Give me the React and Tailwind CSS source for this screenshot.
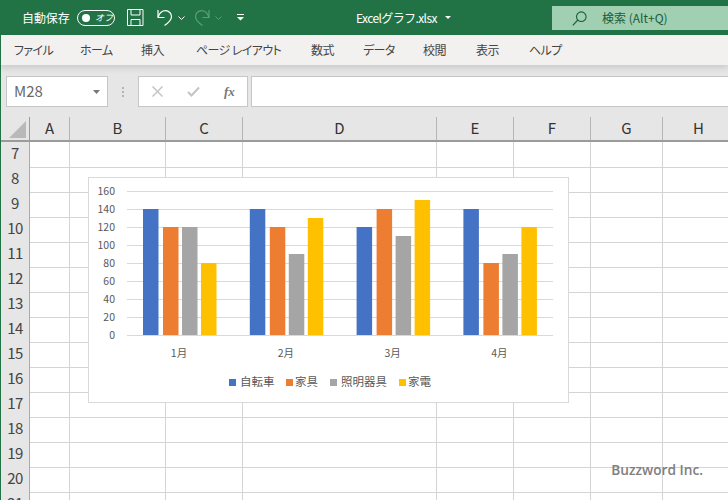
const jp = "font-['Noto_Sans_CJK_JP','Noto_Sans',sans-serif]";

const tabs = [
  { label: "ファイル", w: "w-[66px]" },
  { label: "ホーム", w: "w-[61px]" },
  { label: "挿入", w: "w-[55px]" },
  { label: "ページ レイアウト", w: "w-[115px]" },
  { label: "数式", w: "w-[52px]" },
  { label: "データ", w: "w-[60px]" },
  { label: "校閲", w: "w-[53px]" },
  { label: "表示", w: "w-[53px]" },
  { label: "ヘルプ", w: "w-[40px]" },
];
const columns = ["A", "B", "C", "D", "E", "F", "G", "H"];
const rows = [7, 8, 9, 10, 11, 12, 13, 14, 15, 16, 17, 18, 19, 20, 21];

const series = [
  { name: "自転車", color: "#4472c4", x: 143, values: [140, 140, 120, 140] },
  { name: "家具", color: "#ed7d31", x: 163, values: [120, 120, 140, 80] },
  { name: "照明器具", color: "#a5a5a5", x: 182, values: [120, 90, 110, 90] },
  { name: "家電", color: "#ffc000", x: 201, values: [80, 130, 150, 120] },
];
const months = ["1月", "2月", "3月", "4月"];
const ticks = [160, 140, 120, 100, 80, 60, 40, 20, 0];
const legend = [
  { name: "自転車", color: "#4472c4", x: 229, textX: 240 },
  { name: "家具", color: "#ed7d31", x: 286, textX: 295 },
  { name: "照明器具", color: "#a5a5a5", x: 330, textX: 341 },
  { name: "家電", color: "#ffc000", x: 399, textX: 408 },
];

function Caret({ className }) {
  return (
    <svg width="7" height="4" viewBox="0 0 7 4" className={className}>
      <path d="M.5.5 3.500 3.500 6.500.5" fill="none" stroke="currentColor" strokeWidth="1" />
    </svg>
  );
}

function TitleBar() {
  return (
    <div className="h-[35px] bg-[#217346] flex items-center text-white shrink-0">
      <span className="ml-[22px] text-[12px] w-[48px] whitespace-nowrap tracking-[-0.1px]">自動保存</span>
      <div className="ml-[7px] w-[38px] h-[16px] rounded-full border border-white flex items-center pl-[4px]">
        <span className="w-[8px] h-[8px] rounded-full bg-white" />
        <span className="ml-[5px] text-[9px] leading-none italic">オフ</span>
      </div>
      {/* save */}
      <svg width="17" height="17" viewBox="0 0 17 17" className="ml-[12px]" fill="none" stroke="#fff" strokeWidth="1">
        <path d="M.5.5h15.500v16H.5z" />
        <path d="M4 .5v5.500h9V.5M4 16.500v-6h9v6" />
      </svg>
      {/* undo */}
      <svg width="16" height="17" viewBox="0 0 16 17" className="ml-[13px]" fill="none" stroke="#fff" strokeWidth="1.200">
        <path d="M1 1v7.500h6.500" />
        <path d="M1.200 8C2.500 4 5.500 1.700 8.500 1.700c3.500 0 6 2.800 6 6 0 3.500-3 6-7 8.800" />
      </svg>
      <Caret className="ml-[5px] text-white" />
      {/* redo, greyed out */}
      <svg width="16" height="17" viewBox="0 0 16 17" className="ml-[9px]" fill="none" stroke="#5d9c78" strokeWidth="1.200">
        <path d="M15 1v7.500H8.500" />
        <path d="M14.800 8C13.500 4 10.500 1.700 7.500 1.700c-3.500 0-6 2.800-6 6 0 3.500 3 6 7 8.800" />
      </svg>
      <Caret className="ml-[5px] text-[#5d9c78]" />
      <svg width="7" height="7" viewBox="0 0 7 7" className="ml-[15px]" fill="#fff">
        <path d="M0 0h7v1H0zM0 3h7L3.500 6.500z" />
      </svg>
      <span className="ml-[112px] text-[12px] w-[88px] whitespace-nowrap tracking-[-0.6px]">Excelグラフ.xlsx</span>
      <svg width="6" height="3" viewBox="0 0 6 3" className="ml-[1px]" fill="#fff">
        <path d="M0 0h6L3 3z" />
      </svg>
      <div className="ml-auto self-end mb-[5px] w-[176px] h-[24px] bg-[#a0cfb1] flex items-center text-[#1c5c38]">
        <svg width="15" height="15" viewBox="0 0 15 15" className="ml-[20px]" fill="none" stroke="#1c5c38" strokeWidth="1.100">
          <circle cx="9.300" cy="5.700" r="4.800" />
          <path d="M5.800 9 .8 14.300" />
        </svg>
        <span className="ml-[15px] text-[12px] whitespace-nowrap">検索 (Alt+Q)</span>
      </div>
    </div>
  );
}

function Ribbon() {
  return (
    <div className="h-[30px] bg-[#f3f1f0] border-l border-[#217346] flex items-center pl-[13px] text-[12px] text-[#444] shrink-0 shadow-[0_3px_6px_rgba(0,0,0,0.12)] relative">
      {tabs.map((t) => (
        <span key={t.label} className={`${t.w} whitespace-nowrap tracking-[-0.6px] [font-feature-settings:'palt']`}>{t.label}</span>
      ))}
    </div>
  );
}

function FormulaBar() {
  return (
    <div className="h-[52px] bg-[#e6e6e6] border-l border-[#217346] flex pt-[11px] pl-[5px] shrink-0">
      <div className="w-[102px] h-[31px] bg-white border border-[#c6c6c6] flex items-center justify-between pl-[7px] pr-[7px]">
        <span className="text-[15px] text-[#6a6a6a]">M28</span>
        <svg width="7" height="4" viewBox="0 0 7 4" fill="#777">
          <path d="M0 0h7L3.500 4z" />
        </svg>
      </div>
      <div className="w-[30px] h-[31px] flex flex-col items-center justify-center gap-[2px]">
        <span className="w-[2px] h-[2px] bg-[#b5b5b5]" />
        <span className="w-[2px] h-[2px] bg-[#b5b5b5]" />
        <span className="w-[2px] h-[2px] bg-[#b5b5b5]" />
      </div>
      <div className="w-[110px] h-[31px] bg-white border border-[#c6c6c6] flex items-center pl-[13px]">
        <svg width="11" height="11" viewBox="0 0 11 11" fill="none" stroke="#c4c4c4" strokeWidth="1.500">
          <path d="M.5.5l10 10M10.500.5l-10 10" />
        </svg>
        <svg width="13" height="11" viewBox="0 0 13 11" className="ml-[24px]" fill="none" stroke="#c4c4c4" strokeWidth="2">
          <path d="M1 6l3.500 3.500L12 1.500" />
        </svg>
        <span className="ml-[24px] font-['Liberation_Serif',serif] italic font-bold text-[13px] text-[#777]">fx</span>
      </div>
      <div className="ml-[3px] flex-1 h-[31px] bg-white border border-r-0 border-[#c6c6c6]" />
    </div>
  );
}

function Chart() {
  return (
    <div className="absolute left-[87px] top-[60px] w-[481px] h-[226px] bg-white border border-[#d9d9d9]">
      <svg width="479" height="224" viewBox="89 178 479 224" className={jp}>
        {ticks.map((t) => {
          const y = 335 - t * 0.9;
          return (
            <g key={t}>
              <line x1="127" x2="553" y1={y + 0.5} y2={y + 0.5} stroke="#d9d9d9" shapeRendering="crispEdges" />
              <text x="115" y={y + 3.500} textAnchor="end" fontSize="10.500" fill="#595959">{t}</text>
            </g>
          );
        })}
        {series.map((s) =>
          s.values.map((v, i) => (
            <rect key={s.name + i} x={s.x + i * 106.800} y={335 - v * 0.9} width="15.500" height={v * 0.9} fill={s.color} />
          ))
        )}
        {months.map((m, i) => (
          <text key={m} x={179 + i * 106.800} y="357" textAnchor="middle" fontSize="10.500" fill="#595959">{m}</text>
        ))}
        {legend.map((l) => (
          <g key={l.name}>
            <rect x={l.x} y="379" width="7" height="7" fill={l.color} />
            <text x={l.textX} y="386" fontSize="11.500" fill="#595959">{l.name}</text>
          </g>
        ))}
      </svg>
    </div>
  );
}

function Sheet() {
  const cols = "grid grid-cols-[29px_40px_96px_77px_194px_77px_77px_72px_72px]";
  return (
    <div className="relative flex-1 overflow-hidden border-l border-[#217346] bg-white">
      <div className={`${cols} h-[25px] bg-[#e6e6e6] border-b-2 border-[#9b9b9b]`}>
        <div className="relative border-r border-[#9b9b9b]">
          <svg width="18" height="18" viewBox="0 0 18 18" className="absolute left-[8px] top-[4px]">
            <path d="M17 0v17H0z" fill="#b9b9b9" />
          </svg>
        </div>
        {columns.map((c) => (
          <div key={c} className="flex items-center justify-center text-[15px] text-[#333] border-r border-[#b5b5b5]">{c}</div>
        ))}
      </div>
      {rows.map((r) => (
        <div key={r} className={`${cols} h-[25px]`}>
          <div className="bg-[#e6e6e6] border-r border-b border-[#a9a9a9] pb-[2px] flex items-center justify-center text-[15px] tracking-[-0.5px] text-[#444]">{r}</div>
          {columns.map((c) => (
            <div key={c} className="border-r border-b border-[#d4d4d4]" />
          ))}
        </div>
      ))}
      <Chart />
      <span className="absolute right-[25px] bottom-[19px] font-['Open_Sans',sans-serif] text-[13.700px] text-[#7f7f7f] font-semibold">Buzzword Inc.</span>
    </div>
  );
}

export default function App() {
  return (
    <div className={`w-[728px] h-[500px] overflow-hidden flex flex-col ${jp}`}>
      <TitleBar />
      <Ribbon />
      <FormulaBar />
      <Sheet />
    </div>
  );
}
